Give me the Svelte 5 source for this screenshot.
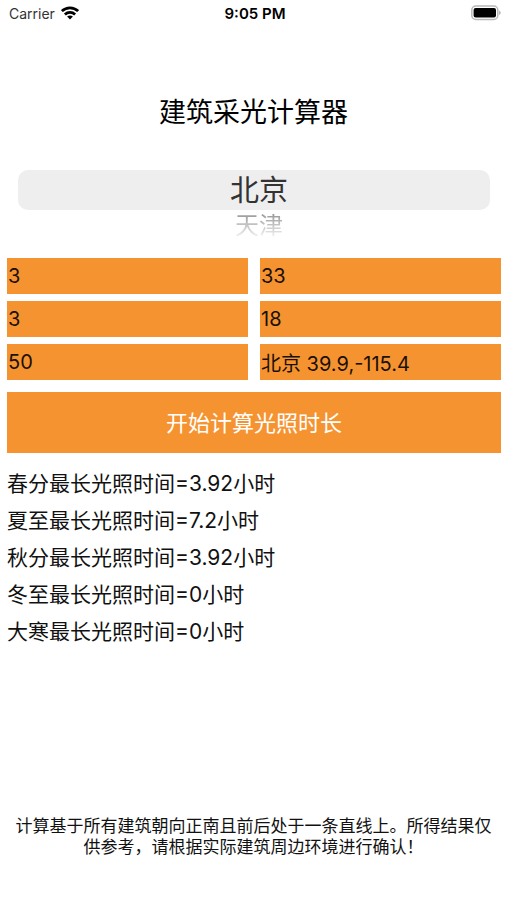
<script lang="ts">
	const cities = [
		{ name: '北京', position: '39.9,-115.4' },
		{ name: '天津', position: '39.1,-117.2' }
	];

	const fields = $state([
		{ id: 'floorHeight', label: '层高', value: '3' },
		{ id: 'frontFloors', label: '前楼层数', value: '33' },
		{ id: 'floor', label: '所在楼层', value: '3' },
		{ id: 'ownFloors', label: '总层数', value: '18' },
		{ id: 'distance', label: '楼间距', value: '50' }
	]);

	const results = [
		{ term: '春分', hours: 3.92 },
		{ term: '夏至', hours: 7.2 },
		{ term: '秋分', hours: 3.92 },
		{ term: '冬至', hours: 0 },
		{ term: '大寒', hours: 0 }
	];

	let selected = $state(0);
	let place = $derived(`${cities[selected].name} ${cities[selected].position}`);
</script>

<div class="screen">
	<header class="statusBar">
		<div class="carrier">
			<span>Carrier</span>
			<svg width="18" height="14" viewBox="0 0 18 14" aria-hidden="true">
				<g fill="none" stroke="#000" stroke-width="2.8">
					<path d="M0.9 5.1C5.5 0.8 12.5 0.8 17.1 5.1" />
					<path d="M3.9 8.4C6.8 5.7 11.2 5.7 14.1 8.4" />
				</g>
				<path d="M9 13.4L6.1 10.5C7.8 9.1 10.2 9.1 11.9 10.5Z" />
			</svg>
		</div>
		<time>9:05 PM</time>
		<svg class="battery" width="30" height="16" viewBox="0 0 30 16" aria-hidden="true">
			<rect x="0.8" y="1" width="26" height="13.4" rx="4" fill="#fff" stroke="#b8b8b8" stroke-width="1.5" />
			<rect x="2.6" y="2.9" width="22.4" height="9.6" rx="2" />
			<path d="M28 5.5C30.3 6.3 30.3 9.3 28 10Z" fill="#b8b8b8" />
		</svg>
	</header>

	<h1>建筑采光计算器</h1>

	<div class="picker" role="radiogroup" aria-label="城市">
		{#each cities as city, i}
			<label class="city" class:current={i === selected} class:above={i < selected}>
				<input type="radio" name="city" value={i} bind:group={selected} />
				<span>{city.name}</span>
			</label>
		{/each}
	</div>

	<form onsubmit={(e) => e.preventDefault()}>
		<div class="fields">
			{#each fields as field}
				<input id={field.id} type="text" aria-label={field.label} bind:value={field.value} />
			{/each}
			<input id="place" type="text" aria-label="位置" value={place} readonly />
		</div>
		<button type="submit">开始计算光照时长</button>
	</form>

	<div class="results">
		{#each results as result}
			<p>{result.term}最长光照时间={result.hours}小时</p>
		{/each}
	</div>

	<footer>
		计算基于所有建筑朝向正南且前后处于一条直线上。所得结果仅供参考，请根据实际建筑周边环境进行确认！
	</footer>
</div>

<style>
	:global(body) {
		margin: 0;
		background: #fff;
	}

	.screen {
		box-sizing: border-box;
		display: flex;
		flex-direction: column;
		min-height: 100vh;
		padding-bottom: 42px;
		font-family: Inter, 'Noto Sans CJK SC', sans-serif;
		color: #111;
	}

	.statusBar {
		display: grid;
		grid-template-columns: 1fr auto 1fr;
		align-items: center;
		height: 26px;
		padding: 0 6px 0 9px;
		font-size: 14px;
	}

	.carrier {
		display: flex;
		align-items: center;
		gap: 6px;
		color: #333;
	}

	.statusBar time {
		font-weight: 600;
		font-size: 15px;
		color: #000;
	}

	.battery {
		justify-self: end;
	}

	h1 {
		margin: 68px 0 0;
		font-size: 27px;
		line-height: 38px;
		font-weight: 400;
		text-align: center;
		color: #000;
	}

	.picker {
		display: grid;
		grid-template-rows: 38px 40px 36px;
		margin: 0 17px 0 18px;
		text-align: center;
	}

	.city {
		position: relative;
		grid-row: 3;
		padding-left: 10px;
		font-size: 24px;
		line-height: 32px;
		cursor: pointer;
	}

	.city span {
		display: block;
		color: transparent;
		background: linear-gradient(#888, #f4f4f4 85%);
		background-clip: text;
	}

	.city.above {
		grid-row: 1;
	}

	.city.current {
		box-sizing: border-box;
		grid-row: 2;
		padding-top: 2px;
		border-radius: 10px;
		background: #eee;
		font-size: 29px;
		line-height: 38px;
	}

	.city.current span {
		color: #333;
		background: none;
	}

	.city input {
		position: absolute;
		opacity: 0;
	}

	form {
		margin: 12px 6px 0 7px;
	}

	.fields {
		display: grid;
		grid-template-columns: 1fr 1fr;
		gap: 7px 12px;
	}

	.fields input {
		box-sizing: border-box;
		width: 100%;
		min-width: 0;
		height: 36px;
		padding: 0 1px;
		border: 0;
		border-radius: 0;
		background: #f69331;
		font: inherit;
		font-size: 20px;
		color: #1a1005;
	}

	button {
		display: block;
		width: 100%;
		height: 61px;
		margin-top: 12px;
		padding: 0 0 4px;
		border: 0;
		background: #f69331;
		font: inherit;
		font-size: 22px;
		color: #fff;
		cursor: pointer;
	}

	.results {
		margin: 12px 7px 0;
	}

	.results p {
		margin: 0;
		font-size: 21px;
		line-height: 37px;
	}

	footer {
		margin-top: auto;
		padding: 0 10px;
		font-size: 17px;
		line-height: 21px;
		text-align: center;
	}
</style>
